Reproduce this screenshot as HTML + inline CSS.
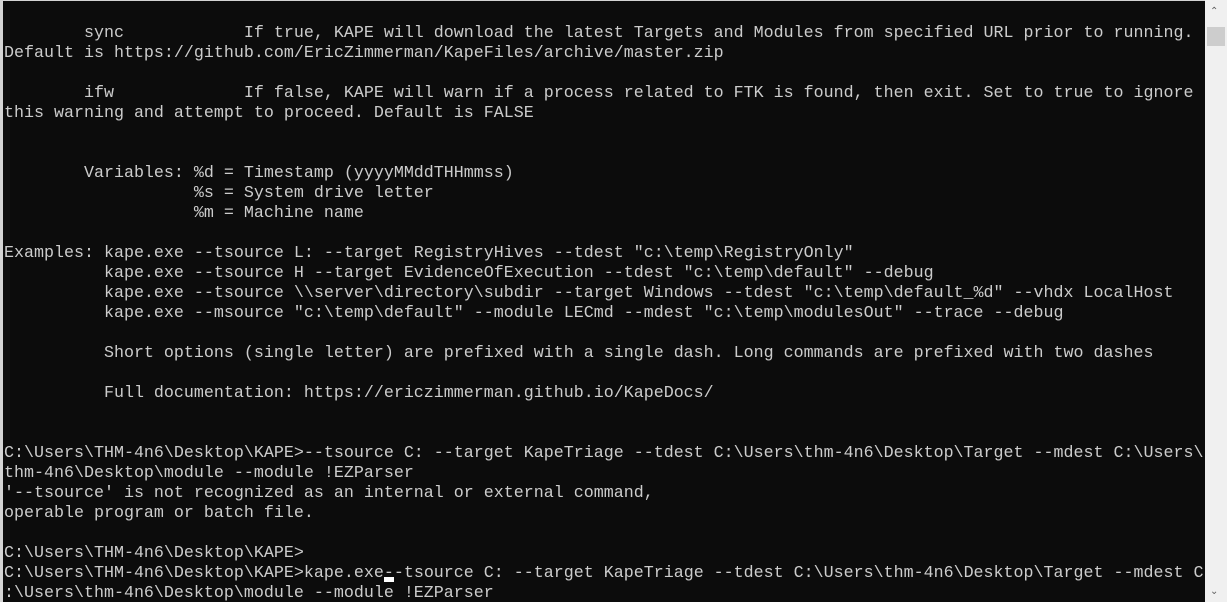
<!DOCTYPE html>
<html><head><meta charset="utf-8"><style>
html,body{margin:0;padding:0;width:1227px;height:602px;overflow:hidden;background:#d4d4d4;}
#t{position:absolute;left:3px;top:1px;width:1202px;height:601px;background:#0c0c0c;overflow:hidden;}
pre{margin:0;position:absolute;left:1px;top:3px;font-family:"Liberation Mono",monospace;font-size:16.667px;line-height:20px;color:#cccccc;white-space:pre;}
#sb{position:absolute;left:1205px;top:0;width:22px;height:602px;background:#f0f0f0;}
#th{position:absolute;left:1207px;top:27px;width:18px;height:19px;background:#cdcdcd;}
.cur{display:inline-block;position:relative}
.cur:after{content:"";position:absolute;left:0;bottom:2px;width:10px;height:5px;background:#fff;}
</style></head><body>
<div id="t"><pre>

        sync            If true, KAPE will download the latest Targets and Modules from specified URL prior to running.
Default is https://github.com/EricZimmerman/KapeFiles/archive/master.zip

        ifw             If false, KAPE will warn if a process related to FTK is found, then exit. Set to true to ignore
this warning and attempt to proceed. Default is FALSE


        Variables: %d = Timestamp (yyyyMMddTHHmmss)
                   %s = System drive letter
                   %m = Machine name

Examples: kape.exe --tsource L: --target RegistryHives --tdest "c:\temp\RegistryOnly"
          kape.exe --tsource H --target EvidenceOfExecution --tdest "c:\temp\default" --debug
          kape.exe --tsource \\server\directory\subdir --target Windows --tdest "c:\temp\default_%d" --vhdx LocalHost
          kape.exe --msource "c:\temp\default" --module LECmd --mdest "c:\temp\modulesOut" --trace --debug

          Short options (single letter) are prefixed with a single dash. Long commands are prefixed with two dashes

          Full documentation: https://ericzimmerman.github.io/KapeDocs/


C:\Users\THM-4n6\Desktop\KAPE>--tsource C: --target KapeTriage --tdest C:\Users\thm-4n6\Desktop\Target --mdest C:\Users\
thm-4n6\Desktop\module --module !EZParser
'--tsource' is not recognized as an internal or external command,
operable program or batch file.

C:\Users\THM-4n6\Desktop\KAPE>
C:\Users\THM-4n6\Desktop\KAPE>kape.exe<span class="cur">-</span>-tsource C: --target KapeTriage --tdest C:\Users\thm-4n6\Desktop\Target --mdest C
:\Users\thm-4n6\Desktop\module --module !EZParser
</pre></div>
<div id="sb"></div><div id="th"></div>
<div style="position:absolute;left:1210px;top:6px;font:10px 'DejaVu Sans',sans-serif;color:#606060">&#8963;</div>
<div style="position:absolute;left:1210px;top:586px;font:10px 'DejaVu Sans',sans-serif;color:#606060">&#8964;</div>
</body></html>
